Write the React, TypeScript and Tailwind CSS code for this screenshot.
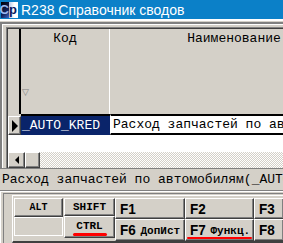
import React from 'react';

const mono = "font-['Liberation_Mono','Courier_New',monospace]";
const raised =
  'border-t border-l border-t-white border-l-white border-b border-r border-b-[#404040] border-r-[#404040] shadow-[inset_-1px_-1px_#808080]';

function FKey({ k, label, w, h, mark }: { k: string; label?: string; w: string; h: string; mark?: boolean }) {
  return (
    <div className={`${raised} ${w} ${h} bg-[#d4d0c8] flex flex-col shrink-0`}>
      <div className="flex items-end gap-[6px] pl-[4px] pt-[2px]">
        <span className="font-['Liberation_Sans_Narrow','Liberation_Sans',sans-serif] font-bold text-[15px] leading-[15px] text-black scale-x-90 origin-left">
          {k}
        </span>
        {label && (
          <span className={`${mono} font-bold text-[11px] leading-[12px] text-black -ml-[3px]`}>{label}</span>
        )}
      </div>
      {mark && <div className="mt-auto mb-[1px] mx-[1px] h-[3px] rounded-full bg-[#ff0000]" />}
    </div>
  );
}

export default function App() {
  return (
    <div className="w-[283px] h-[243px] overflow-hidden bg-[#d4d0c8] flex flex-col">
      {/* title */}
      <div className="h-[19px] shrink-0 bg-[#0b80c8] flex items-center pl-[1px] gap-[3px]">
        <div className="w-[17px] h-[16px] flex font-['Liberation_Sans',sans-serif] font-bold text-[13px] leading-none">
          <div className="w-[8px] bg-[linear-gradient(135deg,#000_0%,#12205a_60%,#3a66c8_100%)] flex items-center justify-end">
            <span className="text-[#9ab8f0]">С</span>
          </div>
          <div className="flex-1 bg-[linear-gradient(90deg,#b8c8e8_0%,#ffffff_60%)] flex items-center">
            <span className="text-[#0a1a60]">р</span>
          </div>
        </div>
        <span className="font-['Liberation_Sans',sans-serif] text-[14px] leading-none text-white whitespace-nowrap">
          R238 Справочник сводов
        </span>
      </div>

      {/* form body */}
      <div className="h-[149px] shrink-0 border-t-2 border-white flex flex-col">
        <div className="flex-1 border-t border-[#d4d0c8] flex flex-col">
          <div className="flex-1 border-t-2 border-l-2 border-[#808080] flex flex-col">
            <div className="flex-1 border-t border-l border-white pt-[2px] pl-[3px] flex flex-col">
              <div className="flex-1 border-t border-l border-[#808080] flex flex-col">
                <div className="flex-1 border-t border-l border-[#404040] flex flex-col overflow-hidden">
                  {/* header */}
                  <div className="h-[85px] shrink-0 flex">
                    <div className="w-[13px] shrink-0 bg-[#d4d0c8] border-r-2 border-black" />
                    <div className="w-[89px] shrink-0 bg-[#d4d0c8] border-r border-white flex flex-col items-center">
                      <span className={`${mono} text-[13px] leading-[14px] text-black pt-[3px]`}>Код</span>
                      <span className="mt-auto mb-[18px] self-start ml-[1px] text-[9px] leading-none text-[#808080]">▽</span>
                    </div>
                    <div className="w-[248px] shrink-0 bg-[#d4d0c8] flex justify-center">
                      <span className={`${mono} text-[13px] leading-[14px] text-black pt-[3px] whitespace-nowrap`}>
                        Наименование
                      </span>
                    </div>
                  </div>
                  {/* data row */}
                  <div className="h-[21px] shrink-0 flex">
                    <div className="w-[13px] shrink-0 flex flex-col">
                      <div className="h-[2px] bg-[#d4d0c8]" />
                      <div className={`${raised} flex-1 bg-[#d4d0c8] flex items-center justify-center`}>
                        <div className="w-0 h-0 border-y-[6px] border-y-transparent border-l-[6px] border-l-black" />
                      </div>
                    </div>
                    <div className="w-[89px] shrink-0 border-t-2 border-black bg-[#0a246a] flex items-center pl-[1px]">
                      <span className={`${mono} text-[13px] leading-none text-white whitespace-nowrap`}>_AUTO_KRED</span>
                    </div>
                    <div className="w-[248px] shrink-0 border-t-2 border-b-2 border-l border-black border-l-white bg-white flex items-center pl-[2px]">
                      <span className={`${mono} text-[13px] leading-none text-black whitespace-nowrap`}>
                        Расход запчастей по автомобилям
                      </span>
                    </div>
                  </div>
                  <div className="flex-1 bg-white" />
                  {/* scrollbar */}
                  <div className="h-[16px] shrink-0 flex">
                    <div className={`${raised} w-[17px] bg-[#d4d0c8] flex items-center justify-center`}>
                      <div className="w-0 h-0 border-y-[4px] border-y-transparent border-r-[4px] border-r-black" />
                    </div>
                    <div className={`${raised} w-[15px] bg-[#d4d0c8]`} />
                    <div className="flex-1 bg-[repeating-conic-gradient(#d4d0c8_0%_25%,#ffffff_0%_50%)] bg-[length:2px_2px]" />
                  </div>
                </div>
              </div>
            </div>
          </div>
        </div>
      </div>

      {/* status line */}
      <div className="h-[22px] shrink-0 border-t border-[#808080] flex items-center pl-[2px]">
        <span className={`${mono} text-[13px] leading-none text-black whitespace-nowrap`}>
          Расход запчастей по автомобилям(_AUTO_KRED)
        </span>
      </div>

      {/* key panel */}
      <div className="flex-1 border-t border-[#808080] flex flex-col">
        <div className="flex-1 border-t border-l border-white flex flex-col pl-[2px] pt-[1px]">
          <div className="flex-1 border-l border-t border-[#808080] flex flex-col pl-[8px] pt-[1px]">
            <div className="flex-1 border-l border-t border-white border-b-2 border-b-[#404040] flex pt-[2px] pl-[1px]">
              {/* modifiers */}
              <div className="flex flex-col w-[49px] shrink-0">
                <div className={`${raised} h-[19px] bg-[#d4d0c8] flex items-center justify-center`}>
                  <span className={`${mono} font-bold text-[10px] leading-none text-black`}>ALT</span>
                </div>
                <div className="h-[19px] border border-white" />
              </div>
              <div className="flex flex-col w-[51px] shrink-0 ml-[1px]">
                <div className={`${raised} h-[18px] bg-[#d4d0c8] flex items-center justify-center`}>
                  <span className={`${mono} font-bold text-[11px] leading-none text-black`}>SHIFT</span>
                </div>
                <div className={`${raised} h-[22px] bg-[#d4d0c8] flex flex-col items-center`}>
                  <span className={`${mono} font-bold text-[11px] leading-none text-black pt-[4px]`}>CTRL</span>
                  <div className="mt-auto mb-[1px] w-[34px] h-[3px] rounded-full bg-[#ff0000]" />
                </div>
              </div>
              {/* function keys */}
              <div className="flex flex-col shrink-0">
                <div className="flex">
                  <FKey k="F1" w="w-[70px]" h="h-[21px]" />
                  <FKey k="F2" w="w-[69px]" h="h-[21px]" />
                  <FKey k="F3" w="w-[30px]" h="h-[21px]" />
                </div>
                <div className="flex">
                  <FKey k="F6" label="ДопИст" w="w-[70px]" h="h-[22px]" />
                  <FKey k="F7" label="Функц." w="w-[69px]" h="h-[22px]" mark />
                  <FKey k="F8" w="w-[30px]" h="h-[22px]" />
                </div>
              </div>
            </div>
          </div>
        </div>
      </div>
    </div>
  );
}
